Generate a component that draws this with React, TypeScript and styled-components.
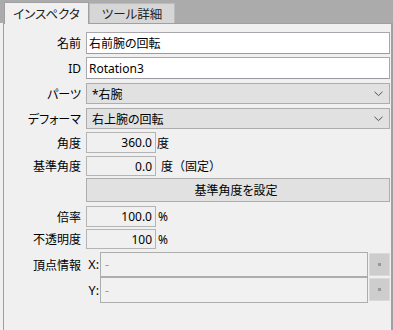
import styled, { createGlobalStyle } from "styled-components";

const Global = createGlobalStyle`
  body {
    margin: 0;
    background: #f0f0f0;
    font-family: "Noto Sans", "Noto Sans CJK JP", sans-serif;
    font-size: 12px;
    color: #000;
    font-feature-settings: "palt";
  }
`;

const Root = styled.div`
  width: 393px;
  height: 330px;
  overflow: hidden;
  background: #f0f0f0;
`;

const TabStrip = styled.div`
  height: 23px;
  background: #ababab;
  display: flex;
  align-items: flex-end;
  padding-left: 4px;
`;

const Tab = styled.div<{ $active?: boolean }>`
  box-sizing: border-box;
  display: flex;
  align-items: center;
  justify-content: center;
  width: ${(p) => (p.$active ? 85 : 86)}px;
  height: ${(p) => (p.$active ? 22 : 20)}px;
  margin-bottom: ${(p) => (p.$active ? -1 : 0)}px;
  background: ${(p) => (p.$active ? "#f0f0f0" : "#d6d6d6")};
  border: 1px solid ${(p) => (p.$active ? "#a0a0a0" : "#bcbcbc")};
  border-bottom: none;
  font-size: 12.5px;
  color: #222;
  position: relative;
  z-index: ${(p) => (p.$active ? 1 : 0)};
`;

const Panel = styled.div`
  box-sizing: border-box;
  margin-left: 3px;
  width: 390px;
  height: 307px;
  border: 1px solid #a0a0a0;
  border-right-width: 2px;
  border-bottom: none;
  padding: 8px 1px 0 0;
`;

const Row = styled.div<{ $top: number; $h: number }>`
  display: flex;
  align-items: center;
  margin-top: ${(p) => p.$top}px;
  height: ${(p) => p.$h}px;
`;

const Label = styled.div`
  width: 77px;
  flex: none;
  text-align: right;
  margin-right: 5px;
  white-space: nowrap;
`;

const TextBox = styled.div`
  box-sizing: border-box;
  flex: 1;
  height: 100%;
  background: #fff;
  border: 1px solid #a7a7ad;
  border-bottom-color: #9a9aa0;
  display: flex;
  align-items: center;
  padding-left: 2px;
  color: #000;
`;

const Select = styled.div`
  box-sizing: border-box;
  flex: 1;
  height: 100%;
  background: #e1e1e1;
  border: 1px solid #adadad;
  display: flex;
  align-items: center;
  justify-content: space-between;
  padding: 0 6px 0 5px;
`;

const NumBox = styled.div`
  box-sizing: border-box;
  width: 70px;
  flex: none;
  height: 100%;
  border: 1px solid #b4b4b4;
  background: #f0f0f0;
  display: flex;
  align-items: center;
  justify-content: flex-end;
  padding-right: 3px;
`;

const Unit = styled.span<{ $gap?: number }>`
  margin-left: ${(p) => p.$gap ?? 1}px;
  font-feature-settings: normal;
  white-space: nowrap;
`;

const Button = styled.div`
  box-sizing: border-box;
  flex: 1;
  height: 100%;
  background: #e1e1e1;
  border: 1px solid #adadad;
  display: flex;
  align-items: center;
  justify-content: center;
  padding-right: 4px;
`;

const Spacer = styled.div`
  width: 82px;
  flex: none;
`;

const AxisLabel = styled.div`
  width: 13px;
  flex: none;
  text-align: right;
  font-size: 12.5px;
`;

const Coord = styled.div`
  box-sizing: border-box;
  width: 268px;
  flex: none;
  height: 100%;
  border: 1px solid #adadad;
  background: #f1f1f1;
  margin-left: 1px;
  display: flex;
  align-items: center;
  padding-left: 4px;
  color: #999;
`;

const PickButton = styled.div`
  box-sizing: border-box;
  width: 22px;
  height: 23px;
  margin-left: 1px;
  background: #cdcdcd;
  border: 1px solid #dadada;
  display: flex;
  align-items: center;
  justify-content: center;
  align-self: flex-start;
  margin-top: 1px;

  &::after {
    content: "";
    width: 3px;
    height: 3px;
    background: #999;
  }
`;

const Chevron = () => (
  <svg width="9" height="6" viewBox="0 0 9 6">
    <path d="M0.5 0.8 L4.5 4.6 L8.5 0.8" fill="none" stroke="#505050" strokeWidth="1" />
  </svg>
);

export default function App() {
  return (
    <Root>
      <Global />
      <TabStrip>
        <Tab $active>インスペクタ</Tab>
        <Tab>ツール詳細</Tab>
      </TabStrip>
      <Panel>
        <Row $top={0} $h={22}>
          <Label>名前</Label>
          <TextBox>右前腕の回転</TextBox>
        </Row>
        <Row $top={3} $h={22}>
          <Label>ID</Label>
          <TextBox>Rotation3</TextBox>
        </Row>
        <Row $top={4} $h={21}>
          <Label>パーツ</Label>
          <Select>
            <span>*右腕</span>
            <Chevron />
          </Select>
        </Row>
        <Row $top={4} $h={21}>
          <Label>デフォーマ</Label>
          <Select>
            <span>右上腕の回転</span>
            <Chevron />
          </Select>
        </Row>
        <Row $top={3} $h={21}>
          <Label>角度</Label>
          <NumBox>360.0</NumBox>
          <Unit>度</Unit>
        </Row>
        <Row $top={3} $h={20}>
          <Label>基準角度</Label>
          <NumBox>0.0</NumBox>
          <Unit $gap={5}>度（固定）</Unit>
        </Row>
        <Row $top={2} $h={24}>
          <Spacer />
          <Button>基準角度を設定</Button>
        </Row>
        <Row $top={4} $h={21}>
          <Label>倍率</Label>
          <NumBox>100.0</NumBox>
          <Unit $gap={2}>%</Unit>
        </Row>
        <Row $top={2} $h={20}>
          <Label>不透明度</Label>
          <NumBox>100</NumBox>
          <Unit $gap={2}>%</Unit>
        </Row>
        <Row $top={3} $h={25}>
          <Label>頂点情報</Label>
          <AxisLabel>X:</AxisLabel>
          <Coord>-</Coord>
          <PickButton />
        </Row>
        <Row $top={0} $h={26}>
          <Spacer />
          <AxisLabel>Y:</AxisLabel>
          <Coord>-</Coord>
          <PickButton />
        </Row>
      </Panel>
    </Root>
  );
}
